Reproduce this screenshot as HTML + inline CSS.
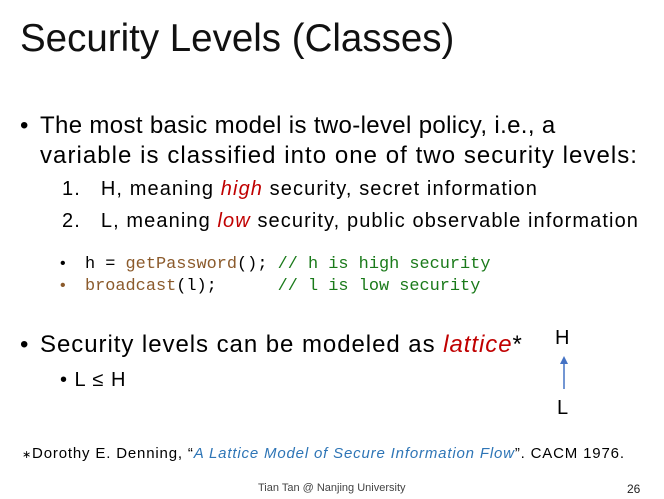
<!DOCTYPE html>
<html><head><meta charset="utf-8"><style>
body{margin:0;width:664px;height:499px;background:#fff;position:relative;overflow:hidden;font-family:"Liberation Sans",sans-serif;color:#000}
div{position:absolute;white-space:pre}
.r{color:#c00000;font-style:italic}
.m{font-family:"Liberation Mono",monospace;font-size:16.9px}
.b{color:#8b5a2b}.g{color:#1a7a1a}
</style></head><body>
<div style="left:20px;top:17px;font-size:38.5px;color:#111">Security Levels (Classes)</div>
<div style="left:20px;top:112px;font-size:24px">•</div>
<div style="left:40px;top:112px;font-size:24px;letter-spacing:0.35px">The most basic model is two-level policy, i.e., a</div>
<div style="left:40px;top:142px;font-size:24px;letter-spacing:1.05px">variable is classified into one of two security levels:</div>
<div style="left:62px;top:178px;font-size:20px;letter-spacing:1.1px">1.   H, meaning <span class="r">high</span> security, secret information</div>
<div style="left:62px;top:210px;font-size:20px;letter-spacing:1.1px">2.   L, meaning <span class="r">low</span> security, public observable information</div>
<div style="left:60px;top:255px;font-size:16px">•</div>
<div class="m" style="left:85px;top:255px">h = <span class="b">getPassword</span>(); <span class="g">// h is high security</span></div>
<div style="left:60px;top:277px;font-size:16px;color:#8b5a2b">•</div>
<div class="m" style="left:85px;top:277px"><span class="b">broadcast</span>(l);      <span class="g">// l is low security</span></div>
<div style="left:20px;top:331px;font-size:24px">•</div>
<div style="left:40px;top:331px;font-size:24px;letter-spacing:0.95px">Security levels can be modeled as <span class="r">lattice</span>*</div>
<div style="left:60px;top:369px;font-size:20px;letter-spacing:1px">• L ≤ H</div>
<div style="left:555px;top:327px;font-size:20px">H</div>
<svg style="position:absolute;left:558px;top:355px" width="12" height="36"><line x1="6" y1="34" x2="6" y2="6" stroke="#4472c4" stroke-width="1.5"/><path d="M2,9 L6,1 L10,9Z" fill="#4472c4"/></svg>
<div style="left:557px;top:397px;font-size:20px">L</div>
<div style="left:22px;top:445px;font-size:15px;letter-spacing:0.83px"><span style="font-size:11px">∗</span>Dorothy E. Denning, “<span style="color:#2e75b6;font-style:italic">A Lattice Model of Secure Information Flow</span>”. CACM 1976.</div>
<div style="left:258px;top:482px;font-size:11px;color:#444">Tian Tan @ Nanjing University</div>
<div style="left:627px;top:482px;font-size:12px;color:#222">26</div>
</body></html>
